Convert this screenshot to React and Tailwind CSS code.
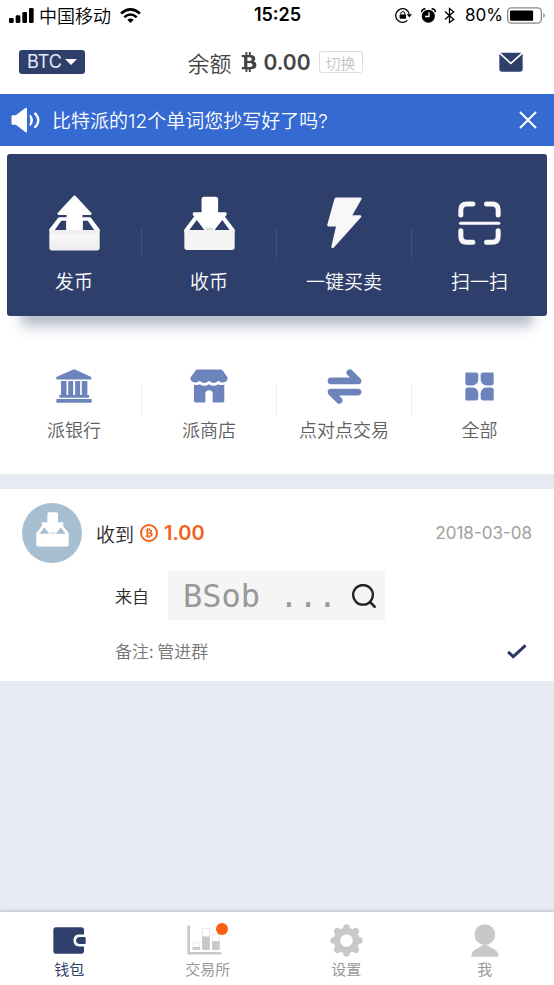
import clsx from 'clsx';
import { FaBtc } from 'react-icons/fa';

const SignalIcon = () => (
  <svg viewBox="27 22 75 45" className="w-[25px] h-[15px]" fill="currentColor" aria-hidden="true">
    <rect x="27" y="52" width="14" height="15" rx="4" />
    <rect x="47" y="44" width="14" height="23" rx="4" />
    <rect x="67" y="34" width="14" height="33" rx="4" />
    <rect x="87" y="22" width="14" height="45" rx="4" />
  </svg>
);

const WifiIcon = () => (
  <svg viewBox="361 22 64 46" className="w-[21px] h-[15px]" fill="none" stroke="currentColor" strokeWidth="8" aria-hidden="true">
    <path d="M364 39 Q393 14 422 39" />
    <path d="M374 50 Q393 34 412 50" />
    <path d="M383 58 Q393 50 403 58 L393 68Z" fill="currentColor" stroke="none" />
  </svg>
);

const RotationLockIcon = () => (
  <svg viewBox="362 22 52 46" className="w-[17px] h-[15px]" fill="none" stroke="currentColor" strokeWidth="4" aria-hidden="true">
    <path d="M406 42 A21 21 0 1 0 400 60" />
    <path d="M398 41 H414 L406 51Z" fill="currentColor" stroke="none" />
    <rect x="376" y="42" width="20" height="13" rx="2" fill="currentColor" stroke="none" />
    <path d="M380 43 V38 Q380 33 386 33 Q392 33 392 38 V43" strokeWidth="3" />
  </svg>
);

const AlarmIcon = () => (
  <svg viewBox="442 22 45 46" className="w-[15px] h-[15px]" fill="none" aria-hidden="true">
    <circle cx="464" cy="47" r="20" fill="currentColor" />
    <path d="M443 35 Q444 25 455 24M486 35 Q485 25 474 24" stroke="currentColor" strokeWidth="5" />
    <path d="M466 35 V48 H454" stroke="white" strokeWidth="4" />
  </svg>
);

const BluetoothIcon = () => (
  <svg viewBox="512 19 34 51" className="w-[11px] h-[17px]" fill="none" stroke="currentColor" strokeWidth="4" aria-hidden="true">
    <path d="M515 32 L542 57 L529 66 V23 L542 33 L515 57" />
  </svg>
);

const BatteryIcon = () => (
  <svg viewBox="699 20 118 50" className="w-[39px] h-[17px]" fill="none" aria-hidden="true">
    <rect x="701" y="22" width="102" height="46" rx="11" stroke="#8a8a8a" strokeWidth="4" />
    <rect x="708" y="30" width="70" height="31" rx="3" fill="currentColor" />
    <path d="M809 36 Q818 45 809 54Z" fill="#8a8a8a" />
  </svg>
);

const MailIcon = () => (
  <svg viewBox="675 157 73 59" className="w-6 h-5" aria-hidden="true">
    <path d="M683 158 H740 Q747 158 747 166 V208 Q747 216 739 216 H684 Q676 216 676 208 V166 Q676 158 683 158Z" fill="#2f3f6b" />
    <path d="M678 160 L711 191 L745 160" fill="none" stroke="white" strokeWidth="5" />
  </svg>
);

const SpeakerIcon = () => (
  <svg viewBox="34 52 90 79" className="w-[30px] h-[26px]" fill="white" aria-hidden="true">
    <path d="M37 77 H48 L77 55 Q82 52 82 58 V126 Q82 132 77 128 L48 106 H37 Q35 106 35 103 V80 Q35 77 37 77Z" />
    <path d="M91 77 Q106 92 91 108 Q97 92 91 77Z" stroke="white" strokeWidth="4" />
    <path d="M105 70 Q128 92 105 115" fill="none" stroke="white" strokeWidth="7" />
  </svg>
);

const CloseIcon = () => (
  <svg viewBox="0 0 18 18" className="size-[18px]" stroke="white" strokeWidth="2" aria-hidden="true">
    <path d="M1 1 L17 17 M17 1 L1 17" />
  </svg>
);

const SendIcon = () => (
  <svg viewBox="148 45 154 168" className="w-[51px] h-14" aria-hidden="true">
    <defs>
      <linearGradient id="send-tray" x1="0" y1="0" x2="0" y2="1">
        <stop offset="0" stopColor="#ececec" />
        <stop offset="0.3" stopColor="#f8f8f8" />
        <stop offset="1" stopColor="#ececec" />
      </linearGradient>
    </defs>
    <path
      fill="white"
      fillRule="evenodd"
      d="M149 155 V148 L175 114 Q177 112 181 112 H269 Q273 112 275 114 L301 148 V155Z M165 151 L185 122 H200 V151Z M250 151 V122 H265 L285 151Z"
    />
    <path fill="white" d="M221 48 Q225 44 229 48 L276 99 Q278 105 272 105 H249 V152 H201 V105 H178 Q172 105 174 99Z" />
    <path d="M149 150 H301 V204 Q301 212 293 212 H157 Q149 212 149 204Z" fill="url(#send-tray)" />
  </svg>
);

const ReceiveIcon = ({ className, tray = '#f5f5f5' }) => (
  <svg viewBox="552 45 154 164" className={className} aria-hidden="true">
    <path
      fill="white"
      fillRule="evenodd"
      d="M553 155 V145 L584 104 H674 L705 145 V155Z M567 148 L591 116 L615 148Z M643 148 L667 116 L691 148Z"
    />
    <path fill="white" d="M613 46 H647 Q655 46 655 54 V93 H678 Q684 96 680 101 L642 148 H616 L579 101 Q576 96 581 93 H605 V54 Q605 46 613 46Z" />
    <path d="M553 147 H705 V199 Q705 207 697 207 H561 Q553 207 553 199Z" fill={tray} />
    <path d="M614 140 H644 L638 148 H620Z" fill="#dedede" />
  </svg>
);

const BoltIcon = () => (
  <svg viewBox="162 50 105 155" className="w-[35px] h-[52px]" fill="#f8f8f8" aria-hidden="true">
    <path d="M190 51 H262 Q268 52 265 57 L238 104 H261 Q267 105 264 110 L182 202 Q175 206 175 198 L189 138 H167 Q161 137 163 132 L184 56 Q185 51 190 51Z" />
  </svg>
);

const ScanIcon = () => (
  <svg viewBox="552 61 128 132" className="w-[43px] h-11" fill="none" stroke="#f8f8f8" strokeLinecap="round" aria-hidden="true">
    <g strokeWidth="15">
      <path d="M560 103 V88 Q560 70 578 70 H596" />
      <path d="M637 70 H654 Q672 70 672 88 V103" />
      <path d="M560 150 V167 Q560 185 578 185 H596" />
      <path d="M637 185 H654 Q672 185 672 167 V150" />
    </g>
    <path d="M559 128 H674" strokeWidth="9" />
  </svg>
);

const BankIcon = () => (
  <svg viewBox="170 44 109 103" className="w-9 h-[34px]" fill="#6c83bb" aria-hidden="true">
    <path d="M221 46 Q225 44 229 46 L277 68 V76 H171 V68Z" />
    <path d="M185 80 H202 V123 H207 V80 H222 V123 H228 V80 H243 V123 H248 V80 H265 V123 H270 V131 H180 V123 H185Z" />
    <rect x="171" y="135" width="107" height="11" rx="2" />
  </svg>
);

const ShopIcon = () => (
  <svg viewBox="572 44 114 101" className="w-[38px] h-[34px]" fill="#6c83bb" aria-hidden="true">
    <path d="M594 45 H664 Q669 45 672 50 L684 68 Q687 75 680 81 Q666 88 657 79 Q643 92 629 79 Q615 92 601 79 Q592 88 578 81 Q571 75 574 68 L587 50 Q590 45 594 45Z" />
    <path d="M584 90 Q593 94 601 89 Q615 99 629 89 Q643 99 657 89 Q665 94 675 90 V139 Q675 144 670 144 H640 V118 Q640 107 629 107 Q618 107 618 118 V144 H589 Q584 144 584 139Z" />
  </svg>
);

const TradeIcon = () => (
  <svg viewBox="159 41 106 106" className="w-[35px] h-[35px]" fill="none" stroke="#6c83bb" strokeWidth="20" strokeLinecap="round" strokeLinejoin="round" aria-hidden="true">
    <path d="M171 77 H253 L228 52" />
    <path d="M253 111 H171 L196 136" />
  </svg>
);

const AllIcon = () => (
  <svg viewBox="575 53 87 86" className="w-[29px] h-[29px]" fill="#6c83bb" aria-hidden="true">
    <path d="M578 54 H607 Q615 54 615 62 V76 Q613 91 598 93 H584 Q576 93 576 85 V56 Q576 54 578 54Z" />
    <path d="M659 54 H630 Q622 54 622 62 V76 Q624 91 639 93 H653 Q661 93 661 85 V56 Q661 54 659 54Z" />
    <path d="M578 138 H607 Q615 138 615 130 V116 Q613 101 598 99 H584 Q576 99 576 107 V136 Q576 138 578 138Z" />
    <path d="M659 138 H630 Q622 138 622 130 V116 Q624 101 639 99 H653 Q661 99 661 107 V136 Q661 138 659 138Z" />
  </svg>
);

const CoinIcon = () => (
  <span className="flex size-[18px] items-center justify-center rounded-full border-2 border-current">
    <FaBtc className="size-[10px]" aria-hidden="true" />
  </span>
);

const SearchIcon = () => (
  <svg viewBox="232 281 72 73" className="size-6" fill="none" stroke="#222" strokeLinecap="round" aria-hidden="true">
    <circle cx="265" cy="314" r="30" strokeWidth="7" />
    <path d="M287 336 L300 350" strokeWidth="8" />
  </svg>
);

const CheckIcon = () => (
  <svg viewBox="698 461 58 44" className="w-5 h-[15px]" fill="none" stroke="#2b3a66" strokeWidth="9" aria-hidden="true">
    <path d="M701 484 L716 498 L752 465" />
  </svg>
);

const WalletIcon = () => (
  <svg viewBox="156 80 100 82" className="w-[33px] h-[27px]" aria-hidden="true">
    <rect x="157" y="81" width="93" height="80" rx="8" fill="#2f3f6b" />
    <path d="M256 103 H236 Q218 103 218 121 Q218 139 236 139 H256Z" fill="white" />
    <path d="M252 110 H238 Q226 111 226 121 Q226 131 238 132 H252 Q255 132 255 129 V113 Q255 110 252 110Z" fill="#2f3f6b" />
  </svg>
);

const ExchangeIcon = () => (
  <svg viewBox="562 83 122 89" className="w-[41px] h-[30px]" aria-hidden="true">
    <path d="M567 84 V167 H664" fill="none" stroke="#c8c8c8" strokeWidth="8" />
    <g fill="white" stroke="#dedede" strokeWidth="2">
      <rect x="580" y="136" width="20" height="20" />
      <rect x="608" y="93" width="21" height="63" />
      <rect x="638" y="110" width="20" height="46" />
    </g>
    <g fill="#c8c8c8">
      <rect x="579" y="148" width="22" height="9" />
      <rect x="607" y="117" width="23" height="40" />
      <rect x="637" y="131" width="22" height="26" />
    </g>
  </svg>
);

const GearIcon = () => (
  <svg viewBox="164 71 100 100" className="w-[33px] h-[33px]" fill="none" stroke="#c8c8c8" strokeLinecap="round" aria-hidden="true">
    <circle cx="214" cy="121" r="29" strokeWidth="20" />
    <path
      strokeWidth="20"
      d="M214 82 V90 M214 152 V160 M175 121 H183 M245 121 H253 M186 93 L190 97 M238 145 L242 149 M186 149 L190 145 M238 97 L242 93"
    />
  </svg>
);

const UserIcon = () => (
  <svg viewBox="589 72 83 99" className="w-7 h-[33px]" fill="#c8c8c8" aria-hidden="true">
    <circle cx="630" cy="104" r="31" />
    <path d="M590 170 V164 Q590 156 603 148 Q615 142 623 135 H637 Q645 142 657 148 Q671 156 671 164 V170Z" />
  </svg>
);

const mainActions = [
  { label: '发币', icon: <SendIcon /> },
  { label: '收币', icon: <ReceiveIcon className="w-[51px] h-[55px]" /> },
  { label: '一键买卖', icon: <BoltIcon /> },
  { label: '扫一扫', icon: <ScanIcon /> },
];

const services = [
  { label: '派银行', icon: <BankIcon /> },
  { label: '派商店', icon: <ShopIcon /> },
  { label: '点对点交易', icon: <TradeIcon /> },
  { label: '全部', icon: <AllIcon /> },
];

const tabs = [
  { label: '钱包', icon: <WalletIcon />, active: true },
  { label: '交易所', icon: <ExchangeIcon />, badge: true },
  { label: '设置', icon: <GearIcon /> },
  { label: '我', icon: <UserIcon /> },
];

const StatusBar = () => (
  <div className="grid grid-cols-[1fr_auto_1fr] items-center h-[30px] pl-[9px] pr-2 text-black">
    <div className="flex items-center">
      <SignalIcon />
      <span className="ml-[5px] mr-[9px] font-['Noto_Sans_CJK_SC',sans-serif] text-lg leading-none font-[350]">中国移动</span>
      <WifiIcon />
    </div>
    <span className="text-lg leading-none font-semibold">15:25</span>
    <div className="flex items-center justify-end">
      <RotationLockIcon />
      <span className="ml-[9px]"><AlarmIcon /></span>
      <span className="ml-2"><BluetoothIcon /></span>
      <span className="ml-[10px] mr-1 text-[17px] leading-none">80%</span>
      <BatteryIcon />
    </div>
  </div>
);

const Header = () => (
  <header className="grid grid-cols-[1fr_auto_1fr] items-center h-16 pl-[19px] pr-[23px]">
    <button className="justify-self-start flex items-center gap-[3px] h-6 pl-2 pr-2 rounded-[3px] bg-[#2f3f6b] text-[#e6ebfa] text-lg leading-none">
      BTC
      <span className="border-x-[6px] border-t-[6px] border-x-transparent border-t-white" />
    </button>
    <div className="flex items-center text-[#444]">
      <span className="font-['Noto_Sans_CJK_SC',sans-serif] text-[22px] leading-none font-[350]">余额</span>
      <FaBtc className="ml-2 mr-1 size-5" aria-hidden="true" />
      <span className="text-[21px] leading-none font-semibold">0.00</span>
      <button className="ml-2 h-[22px] px-[6px] rounded-[3px] border border-[#dcdcdc] text-[#c4c4c4] font-['Noto_Sans_CJK_SC',sans-serif] text-[15px] leading-none font-[350]">
        切换
      </button>
    </div>
    <button aria-label="消息" className="justify-self-end p-2">
      <MailIcon />
    </button>
  </header>
);

const ActionGrid = ({ items, dark }) => (
  <div className={clsx('grid grid-cols-4', dark ? 'h-[162px]' : 'h-[158px]')}>
    {items.map((item, i) => (
      <div key={item.label} className="flex">
        <button className={clsx('flex-1 flex flex-col items-center', dark ? 'pt-[41px] text-white' : 'pt-[52px] text-[#606060]')}>
          <span className={clsx('flex items-center justify-center', dark ? 'h-14' : 'h-9')}>{item.icon}</span>
          <span
            className={clsx(
              "whitespace-nowrap font-['Noto_Sans_CJK_SC',sans-serif] font-[350] leading-5",
              dark ? 'mt-5 text-[19px]' : 'mt-[15px] text-lg'
            )}
          >
            {item.label}
          </span>
        </button>
        {i < items.length - 1 && (
          <span className={clsx('w-px h-[30px]', dark ? 'mt-[74px] bg-[#42517d]' : 'mt-[70px] bg-[#ebebeb]')} />
        )}
      </div>
    ))}
  </div>
);

const Transaction = () => (
  <section className="mt-[15px] bg-white pt-[14px] pb-5 pl-[22px] pr-[22px]">
    <div className="flex items-center">
      <span className="flex size-[60px] items-center justify-center rounded-full bg-[#a7bfd0] pb-2">
        <ReceiveIcon className="w-[33px] h-[35px]" tray="white" />
      </span>
      <span className="ml-[14px] font-['Noto_Sans_CJK_SC',sans-serif] text-[19px] leading-none font-[350] text-[#2a2a2a]">收到</span>
      <span className="ml-[6px] flex items-center gap-[6px] text-[#f26318]">
        <CoinIcon />
        <span className="text-xl leading-none font-semibold">1.00</span>
      </span>
      <time className="ml-auto text-[17px] leading-none text-[#a0a0a0]">2018-03-08</time>
    </div>
    <div className="mt-2 ml-[93px] flex items-center">
      <span className="font-['Noto_Sans_CJK_SC',sans-serif] text-[17px] leading-none font-[350] text-[#2a2a2a]">来自</span>
      <div className="ml-[19px] flex h-[49px] w-[217px] items-center justify-between bg-[#f5f5f5] pl-[15px] pr-[9px]">
        <span className="whitespace-pre font-['DejaVu_Sans_Mono',monospace] text-[32px] leading-none text-[#999]">BSob ...</span>
        <button aria-label="搜索">
          <SearchIcon />
        </button>
      </div>
    </div>
    <div className="mt-[21px] ml-[93px] flex items-center justify-between pr-[5px] text-[17px] leading-5 text-[#757575]">
      <span className="font-['Noto_Sans_CJK_SC',sans-serif] font-[350]">备注: 管进群</span>
      <CheckIcon />
    </div>
  </section>
);

const TabBar = () => (
  <nav className="mt-auto grid grid-cols-4 h-[73px] bg-white shadow-[0_-1px_3px_rgba(0,0,0,0.2)]">
    {tabs.map((tab) => (
      <button
        key={tab.label}
        className={clsx('flex flex-col items-center pt-[11px] text-[15px]', tab.active ? 'text-[#2f3f6b]' : 'text-[#999]')}
      >
        <span className="relative flex h-[34px] items-center">
          {tab.icon}
          {tab.badge && <span className="absolute top-0 right-0 size-3 rounded-full bg-[#f9600d]" />}
        </span>
        <span className="mt-[3px] leading-5">{tab.label}</span>
      </button>
    ))}
  </nav>
);

const App = () => {
  return (
    <div className="flex min-h-screen flex-col bg-[#e6eaf2] font-[Inter,'Noto_Sans_CJK_SC',sans-serif]">
      <div className="bg-white">
        <StatusBar />
        <Header />
        <div className="flex items-center h-[52px] pl-[11px] pr-[17px] bg-[#366ad3] text-white">
          <SpeakerIcon />
          <p className="ml-[11px] pt-[3px] text-[19px] leading-none font-[350]">比特派的12个单词您抄写好了吗?</p>
          <button aria-label="关闭" className="ml-auto">
            <CloseIcon />
          </button>
        </div>
        <div className="mx-[7px] mt-2 rounded-[3px] bg-[#2f3f6b] shadow-[0_24px_12px_-14px_rgba(47,63,107,0.35)]">
          <ActionGrid items={mainActions} dark />
        </div>
        <div className="mx-[7px]">
          <ActionGrid items={services} />
        </div>
      </div>
      <Transaction />
      <TabBar />
    </div>
  );
};

export default App;
